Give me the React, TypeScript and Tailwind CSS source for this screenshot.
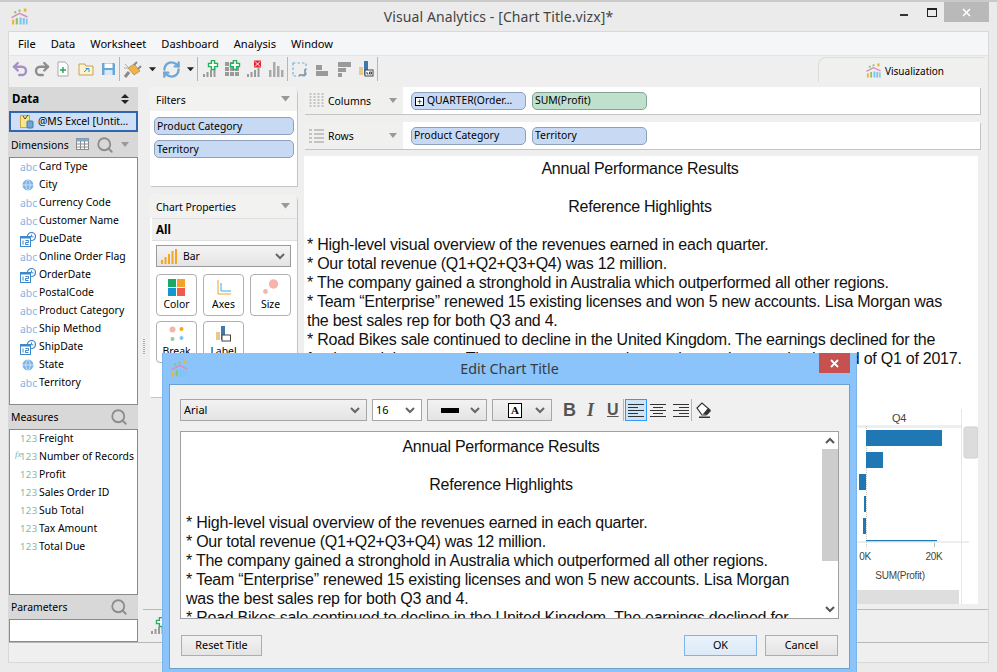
import React from "react";
import { Undo2, Redo2, RefreshCw, Search, Globe } from "lucide-react";

const Logo = ({ s = 16 }: { s?: number }) => (
  <svg width={s} height={s} viewBox="0 0 16 16">
    <rect x="12" y="0.5" width="2.5" height="3" fill="#f5b335" />
    <rect x="7" y="1.5" width="2" height="2" fill="#8cc46c" />
    <rect x="3" y="3" width="2" height="2" fill="#8cc46c" />
    <polyline points="0.5,9 8,5 15.5,8.5" fill="none" stroke="#d68fb8" strokeWidth="1.4" />
    <rect x="1" y="11" width="2" height="4.5" fill="#f5b335" />
    <rect x="4.5" y="9.5" width="2" height="6" fill="#8cc46c" />
    <rect x="8" y="9" width="2" height="6.5" fill="#7ec4ee" />
    <rect x="11" y="9.5" width="2" height="6" fill="#7ec4ee" />
    <rect x="14" y="10" width="1.6" height="5.5" fill="#7ec4ee" />
  </svg>
);

const Chev = ({ c = "#666" }: { c?: string }) => (
  <svg width="10" height="7" viewBox="0 0 10 7" className="shrink-0">
    <polyline points="1,1 5,5 9,1" fill="none" stroke={c} strokeWidth="2" />
  </svg>
);

const Caret = ({ c = "#9a9a9a", w = 10 }: { c?: string; w?: number }) => (
  <svg width={w} height={w / 2 + 1} viewBox="0 0 10 6" className="shrink-0">
    <polygon points="0,0 10,0 5,6" fill={c} />
  </svg>
);

const Sep = () => <div className="w-px h-[24px] bg-[#b5b5b5] shrink-0" />;

const Bars = ({ c = "#9a9a9a" }: { c?: string }) => (
  <g fill={c}>
    <rect x="1" y="14" width="2" height="3" />
    <rect x="4.5" y="12" width="2" height="5" />
    <rect x="8" y="10" width="2" height="7" />
    <rect x="11.5" y="8" width="2" height="9" />
  </g>
);
const Plus = ({ x, y }: { x: number; y: number }) => (
  <path
    d={`M${x - 1.6} ${y - 4.5}h3.2v2.9h2.9v3.2h-2.9v2.9h-3.2v-2.9h-2.9v-3.2h2.9z`}
    fill="#fff"
    stroke="#1fb45a"
    strokeWidth="1.4"
  />
);

const I = ({ w = 18, children }: { w?: number; children: React.ReactNode }) => (
  <svg width={w} height="18" viewBox={`0 0 ${w} 18`} className="shrink-0">
    {children}
  </svg>
);

function Toolbar() {
  return (
    <div className="h-[26px] flex items-center relative">
      <div className="flex items-center w-[809px] h-full">
        <div className="w-[2px]" />
        <Undo2 size={18} color="#a88fc8" strokeWidth={3.2} />
        <Redo2 size={18} color="#8c8c8c" strokeWidth={3.2} className="ml-[4px]" />
        <div className="ml-[3px]">
          <I>
            <path d="M4 2h7l3 3v11H4z" fill="#fff" stroke="#a8a8a8" />
            <path d="M9 7v6M6 10h6" stroke="#23a455" strokeWidth="1.4" />
          </I>
        </div>
        <div className="ml-[6px]">
          <I>
            <path d="M1 4h6l1 2h7v9H1z" fill="#fdf3d2" stroke="#c7a24f" />
            <path d="M6 12l4-3.5M7.5 8.5H11V12" stroke="#3e8ccb" fill="none" />
          </I>
        </div>
        <div className="ml-[4px]">
          <I>
            <path d="M2 3h12l1 1v11H2z" fill="#6aa6d6" />
            <rect x="4.5" y="3.5" width="8" height="4.5" fill="#fff" />
            <rect x="4.5" y="10" width="8" height="5" fill="#dce9f4" />
          </I>
        </div>
        <div className="ml-[1px]"><Sep /></div>
        <div className="ml-[3px]">
          <I w={20}>
            <path d="M2 17l4-5" stroke="#8a8a8a" strokeWidth="3" />
            <path d="M5 8l6-4 6 7-6 4z" fill="#f2b24a" stroke="#8f7c50" strokeWidth=".6" />
            <path d="M11 5l3-3M15 9l3-3" stroke="#8a8a8a" strokeWidth="2" />
            <path d="M2 4l3 3M1 8h4" stroke="#a9a9a9" />
          </I>
        </div>
        <div className="ml-[6px]"><Caret c="#222" w={7} /></div>
        <RefreshCw size={19} color="#6fa8d6" strokeWidth={3} className="ml-[6px]" />
        <div className="ml-[6px]"><Caret c="#222" w={7} /></div>
        <div className="ml-[3px]"><Sep /></div>
        <div className="ml-[4px]">
          <I><Bars /><Plus x={11} y={5} /></I>
        </div>
        <div className="ml-[4px]">
          <I>
            <g fill="#9a9a9a">
              <rect x="1" y="2" width="4" height="4" /><rect x="1" y="7" width="4" height="4" /><rect x="1" y="12" width="4" height="4" />
              <rect x="6" y="7" width="4" height="4" /><rect x="6" y="12" width="4" height="4" />
              <rect x="11" y="12" width="4" height="4" /><rect x="11" y="7" width="4" height="4" /><rect x="6" y="2" width="4" height="4" />
            </g>
            <Plus x={11} y={5} />
          </I>
        </div>
        <div className="ml-[4px]">
          <I>
            <Bars />
            <rect x="8" y="0.5" width="7" height="7" fill="#e8202a" />
            <path d="M9 1.5l5 5M14 1.5l-5 5" stroke="#fff" />
          </I>
        </div>
        <div className="ml-[4px]">
          <I>
            <g fill="#ababab">
              <rect x="1" y="10" width="2.5" height="7" />
              <rect x="5" y="2" width="2.5" height="15" />
              <rect x="9" y="6" width="2.5" height="11" />
              <rect x="13" y="10" width="2.5" height="7" />
            </g>
          </I>
        </div>
        <div className="ml-[1px]"><Sep /></div>
        <div className="ml-[3px]">
          <I>
            <path d="M2 3h13v13H2z" fill="none" stroke="#6fb0de" strokeDasharray="2.5 2" strokeWidth="1.2" />
            <path d="M14 9v6h-6" fill="none" stroke="#8a8a8a" strokeWidth="1.5" />
          </I>
        </div>
        <div className="ml-[4px]">
          <I>
            <rect x="3" y="5" width="6" height="5" fill="#9a9a9a" />
            <rect x="3" y="11" width="12" height="5" fill="#9a9a9a" />
          </I>
        </div>
        <div className="ml-[6px]">
          <I>
            <rect x="1" y="2" width="13" height="5" fill="#9a9a9a" />
            <rect x="1" y="8" width="8" height="4" fill="#9a9a9a" />
            <rect x="1" y="13" width="4" height="4" fill="#9a9a9a" />
          </I>
        </div>
        <div className="ml-[3px]">
          <I>
            <rect x="1" y="7" width="4" height="8" fill="#e8c88e" />
            <rect x="6" y="1" width="4" height="14" fill="#3f78ae" />
            <rect x="7" y="10" width="8" height="6" fill="#fff" stroke="#444" />
            <path d="M9 12v2h1.5M11.5 12h2v2h-2z" stroke="#444" fill="none" />
          </I>
        </div>
        <div className="ml-[1px]"><Sep /></div>
      </div>
      <div className="h-[25px] self-end w-[167px] bg-[#f0f0ee] border-t border-l border-[#dcdcdc] rounded-tl-lg flex items-center pl-[47px] gap-[4px] text-[10px] text-black">
        <Logo s={15} />
        <span className="pt-[2px]">Visualization</span>
      </div>
    </div>
  );
}

const AbcI = () => <span className="text-[#86b3e6] text-[10.4px] leading-none w-[16px] text-center">abc</span>;
const GlobeI = () => (
  <span className="w-[16px] flex justify-center">
    <Globe size={14} color="#fff" fill="#7fb3e6" strokeWidth={1} />
  </span>
);
const DateI = () => (
  <svg width="16" height="15" viewBox="0 0 16 15" className="shrink-0">
    <circle cx="11.5" cy="4.5" r="4" fill="#fff" stroke="#3f87c9" strokeWidth="1.2" />
    <path d="M11.5 2.5v2.3h2" stroke="#3f87c9" fill="none" />
    <rect x="0.5" y="4.5" width="10" height="10" fill="#fff" stroke="#3f87c9" />
    <rect x="0.5" y="4.5" width="10" height="2" fill="#3f87c9" />
    <path d="M3 8.5v4M5.5 8.5h3v2h-3v2h3" stroke="#3f87c9" fill="none" />
  </svg>
);

const dims: [string, React.ReactNode][] = [
  ["Card Type", <AbcI />],
  ["City", <GlobeI />],
  ["Currency Code", <AbcI />],
  ["Customer Name", <AbcI />],
  ["DueDate", <DateI />],
  ["Online Order Flag", <AbcI />],
  ["OrderDate", <DateI />],
  ["PostalCode", <AbcI />],
  ["Product Category", <AbcI />],
  ["Ship Method", <AbcI />],
  ["ShipDate", <DateI />],
  ["State", <GlobeI />],
  ["Territory", <AbcI />],
];
const meas = ["Freight", "Number of Records", "Profit", "Sales Order ID", "Sub Total", "Tax Amount", "Total Due"];

const Mag = () => <Search size={18} color="#8c8c8c" strokeWidth={2.4} className="shrink-0" />;

function LeftCol() {
  return (
    <div className="w-[129px] shrink-0 pt-[5px] flex flex-col text-[10.4px] text-black">
      <div className="h-[23px] bg-[#d8d8d8] flex items-center justify-between pl-[3px] pr-[9px] font-bold text-[11.5px]">
        <span>Data</span>
        <svg width="8" height="10" viewBox="0 0 8 10"><path d="M0 4l4-4 4 4zM0 6l4 4 4-4z" fill="#222" /></svg>
      </div>
      <div className="h-[22px] bg-[#d8d8d8] flex items-center">
        <div className="w-full h-[21px] bg-[#cfe0f6] border-2 border-[#2f66ad] flex items-center pl-[9px] gap-[4px]">
          <svg width="14" height="15" viewBox="0 0 14 15" className="shrink-0">
            <rect x="0.5" y="1.5" width="9" height="12" fill="#f8e58c" stroke="#c8a84a" />
            <path d="M3 2l2 3 3-4" stroke="#444" fill="none" />
            <rect x="7" y="7" width="6" height="7" rx="1" fill="#6ea6d8" stroke="#3f78ae" />
          </svg>
          <span className="whitespace-nowrap pt-[2px]">@MS Excel [Untit…</span>
        </div>
      </div>
      <div className="h-[25px] bg-[#d8d8d8] flex items-center pl-[2px] pr-[9px]">
        <span className="pt-[2px] w-[53px]">Dimensions</span>
        <svg width="14" height="13" viewBox="0 0 14 13" className="ml-[12px] shrink-0">
          <rect x="0.5" y="0.5" width="12" height="11" fill="#fff" stroke="#8a8a8a" />
          <rect x="0.5" y="0.5" width="12" height="3" fill="#7fa8d0" />
          <path d="M4.5 3v8M8.5 3v8M1 6h11M1 9h11" stroke="#8a8a8a" />
        </svg>
        <div className="ml-[6px]"><Mag /></div>
        <div className="ml-[7px]"><Caret w={8} /></div>
      </div>
      <div className="h-[248px] bg-white border border-[#8a8a8a]">
        {dims.map(([n, ic]) => (
          <div key={n} className="h-[18px] flex items-center pl-[10px] gap-[3px] whitespace-nowrap">
            {ic}
            <span>{n}</span>
          </div>
        ))}
      </div>
      <div className="h-[24px] bg-[#d8d8d8] flex items-center justify-between pl-[2px] pr-[10px]">
        <span className="pt-[2px]">Measures</span>
        <Mag />
      </div>
      <div className="h-[166px] bg-white border border-[#8a8a8a]">
        {meas.map((n) => (
          <div key={n} className="h-[18px] flex items-center pl-[10px] gap-[3px] whitespace-nowrap relative">
            {n === "Number of Records" && (
              <span className="absolute left-[5px] top-0 text-[9px] italic text-[#7fb5a5] font-['Liberation_Serif',serif]">fx</span>
            )}
            <span className="text-[#83b8a8] text-[9.5px] tracking-[0.4px] leading-none w-[16px] text-right">123</span>
            <span>{n}</span>
          </div>
        ))}
      </div>
      <div className="h-[24px] bg-[#d8d8d8] flex items-center justify-between pl-[2px] pr-[10px]">
        <span className="pt-[2px]">Parameters</span>
        <Mag />
      </div>
      <div className="h-[23px] bg-white border border-[#8a8a8a]" />
    </div>
  );
}

const Pill = ({ t, w = "w-[115px]", green }: { t: React.ReactNode; w?: string; green?: boolean }) => (
  <div
    className={`${w} h-[18px] shrink-0 rounded-[5px] border flex items-center pl-[2px] pt-[1px] whitespace-nowrap text-[10.4px] text-black ${
      green ? "bg-[#bfe0cc] border-[#86a392]" : "bg-[#c8daf3] border-[#8fa0bb]"
    }`}
  >
    {t}
  </div>
);

const PanelHead = ({ t }: { t: string }) => (
  <div className="h-[24px] bg-[#f2f2f0] rounded-t-md flex items-center justify-between pl-[6px] pr-[7px]">
    <span className="pt-[3px]">{t}</span>
    <Caret c="#999" w={9} />
  </div>
);

const PropBtn = ({ t, children }: { t: string; children: React.ReactNode }) => (
  <div className="h-[42px] border border-[#b0b0b0] rounded-[4px] bg-white flex flex-col items-center pt-[2px]">
    <div className="h-[20px] flex items-center">{children}</div>
    <span>{t}</span>
  </div>
);

function FilterCol() {
  return (
    <div className="w-[147px] shrink-0 flex flex-col gap-[8px] text-[10.4px] text-black">
      <div className="h-[99px] bg-white shadow-[1px_1px_0_#c4c4c4] rounded-t-md">
        <PanelHead t="Filters" />
        <div className="pt-[6px] pl-[4px] pr-[3px] flex flex-col gap-[5px]">
          <Pill t="Product Category" w="w-full" />
          <Pill t="Territory" w="w-full" />
        </div>
      </div>
      <div className="h-[203px] bg-white shadow-[1px_1px_0_#c4c4c4] rounded-t-md">
        <PanelHead t="Chart Properties" />
        <div className="h-[23px] ml-[2px] bg-[#f0f0f0] border-y border-[#dedede] flex items-center pl-[4px] font-bold text-[11.5px]">All</div>
        <div className="mx-[6px] mt-[4px] h-[22px] border border-[#9a9a9a] bg-gradient-to-b from-[#f4f4f4] to-[#e4e4e4] flex items-center pl-[4px] pr-[5px]">
          <svg width="16" height="15" viewBox="0 0 16 15">
            <g fill="#f5a623">
              <rect x="0" y="11" width="2" height="4" /><rect x="3.5" y="8" width="2" height="7" />
              <rect x="7" y="5" width="2" height="10" /><rect x="10.5" y="2" width="2" height="13" />
              <rect x="14" y="0" width="2" height="15" />
            </g>
          </svg>
          <span className="ml-[6px] flex-1 pt-[2px]">Bar</span>
          <Chev />
        </div>
        <div className="grid grid-cols-3 gap-x-[6px] gap-y-[5px] mx-[6px] mt-[7px]">
          <PropBtn t="Color">
            <svg width="17" height="17" viewBox="0 0 17 17">
              <rect width="8" height="8" fill="#1aab62" />
              <rect x="9" width="8" height="8" fill="#f5a02a" />
              <rect y="9" width="8" height="8" fill="#1396cf" />
              <rect x="9" y="9" width="8" height="8" fill="#ef5b4c" />
            </svg>
          </PropBtn>
          <PropBtn t="Axes">
            <svg width="14" height="15" viewBox="0 0 14 15">
              <path d="M1 0v14h13" fill="none" stroke="#f5a02a" />
              <path d="M4 3v8h10" fill="none" stroke="#37aee0" />
            </svg>
          </PropBtn>
          <PropBtn t="Size">
            <svg width="16" height="16" viewBox="0 0 16 16">
              <circle cx="10.5" cy="5" r="4.7" fill="#f6b5ab" />
              <circle cx="2.5" cy="12.5" r="2.4" fill="#f6b5ab" />
            </svg>
          </PropBtn>
          <PropBtn t="Break">
            <svg width="16" height="16" viewBox="0 0 16 16">
              <circle cx="3.5" cy="3.5" r="3" fill="#f6b5ab" />
              <circle cx="12.5" cy="3" r="2" fill="#f5a623" />
              <circle cx="3.5" cy="13" r="2" fill="#8fcb9b" />
              <circle cx="12.5" cy="12" r="2" fill="#7ec4ee" />
            </svg>
          </PropBtn>
          <PropBtn t="Label">
            <svg width="15" height="17" viewBox="0 0 15 17">
              <rect x="0" y="6" width="4" height="8" fill="#e8c88e" />
              <rect x="5" y="0" width="4" height="14" fill="#3f78ae" />
              <rect x="6" y="9" width="8.5" height="6" fill="#fff" stroke="#444" />
            </svg>
          </PropBtn>
        </div>
      </div>
    </div>
  );
}

const Shelf = ({ t, icon, children }: { t: string; icon: React.ReactNode; children: React.ReactNode }) => (
  <div className="h-[27px] flex shadow-[1px_1px_0_#c4c4c4] bg-white text-[10.4px] text-black">
    <div className="w-[99px] bg-[#f0f0ee] flex items-center pl-[5px] shrink-0">
      {icon}
      <span className="ml-[4px] flex-1 pt-[2px]">{t}</span>
      <span className="mr-[6px]"><Caret c="#999" w={8} /></span>
    </div>
    <div className="flex items-center gap-[6px] pl-[8px]">{children}</div>
  </div>
);

const L = ({ c }: { c: string }) => <div className="whitespace-nowrap">{c || "\u00a0"}</div>;

const rearLines = [
  "* High-level visual overview of the revenues earned in each quarter.",
  "* Our total revenue (Q1+Q2+Q3+Q4) was 12 million.",
  "* The company gained a stronghold in Australia which outperformed all other regions.",
  "* Team “Enterprise” renewed 15 existing licenses and won 5 new accounts. Lisa Morgan was",
  "the best sales rep for both Q3 and 4.",
  "* Road Bikes sale continued to decline in the United Kingdom. The earnings declined for the",
  "for the straight quarter. The company expects the earnings to improve by the end of Q1 of 2017.",
];

function Chart() {
  return (
    <div className="mt-auto self-end h-[196px] w-[121px] shrink-0">
      <svg width="121" height="196" viewBox="0 0 121 196">
        <rect x="0" y="17" width="104" height="3" fill="#eeeeee" />
        <rect x="0" y="133" width="112" height="2" fill="#eeeeee" />
        <rect x="104" y="1" width="1" height="195" fill="#e6e6e6" />
        <text x="42" y="14" fontSize="11" textAnchor="middle" fill="#444" fontFamily="Liberation Sans, sans-serif">Q4</text>
        <line x1="9.5" y1="18" x2="9.5" y2="139" stroke="#c8c8c8" strokeDasharray="1 1" />
        <g fill="#1f77b4">
          <rect x="9" y="22" width="76" height="16" />
          <rect x="9" y="44" width="17" height="16" />
          <rect x="2" y="66" width="7" height="16" />
          <rect x="7" y="88" width="2" height="16" />
          <rect x="6" y="110" width="3" height="16" />
          <rect x="9" y="132" width="71" height="1.2" />
        </g>
        <line x1="77.5" y1="135" x2="77.5" y2="139" stroke="#bbb" />
        <text x="8" y="152" fontSize="10" textAnchor="middle" fill="#444" fontFamily="Liberation Sans, sans-serif">0K</text>
        <text x="77" y="152" fontSize="10" textAnchor="middle" fill="#444" fontFamily="Liberation Sans, sans-serif">20K</text>
        <text x="43" y="171" fontSize="10" textAnchor="middle" fill="#444" fontFamily="Liberation Sans, sans-serif">SUM(Profit)</text>
        <rect x="0" y="182" width="102" height="14" fill="#dedede" />
        <rect x="107" y="19" width="14" height="31" rx="2" fill="#dcdcdc" stroke="#cfcfcf" />
      </svg>
    </div>
  );
}

function Main() {
  return (
    <div className="flex-1 flex flex-col min-w-0">
      <div className="h-[527px] flex">
        <div className="w-[12px] shrink-0 flex items-center justify-center">
          <div className="w-[2px] h-[16px] mt-[2px] bg-[repeating-linear-gradient(#aaa_0,#aaa_1px,transparent_1px,transparent_2px)]" />
        </div>
        <div className="pt-[5px]"><FilterCol /></div>
        <div className="w-[676px] ml-[7px] pt-[5px] flex flex-col">
          <Shelf
            t="Columns"
            icon={
              <svg width="15" height="15" viewBox="0 0 15 15">
                <path d="M1.5 0v15M5.5 0v15M9.5 0v15M13.5 0v15" stroke="#c4c4c4" strokeWidth="2" strokeDasharray="2 1" />
              </svg>
            }
          >
            <Pill
              t={
                <span className="flex items-center gap-[3px]">
                  <span className="w-[9px] h-[9px] border border-black bg-white flex items-center justify-center text-[9px] leading-none ml-px">+</span>
                  QUARTER(Order…
                </span>
              }
            />
            <Pill t="SUM(Profit)" w="w-[115px]" green />
          </Shelf>
          <div className="h-[8px]" />
          <Shelf
            t="Rows"
            icon={
              <svg width="15" height="15" viewBox="0 0 15 15">
                <path d="M0 2h3M5 2h10M0 6h3M5 6h10M0 10h3M5 10h10M0 14h3M5 14h10" stroke="#b4b4b4" strokeWidth="1.4" />
              </svg>
            }
          >
            <Pill t="Product Category" />
            <Pill t="Territory" />
          </Shelf>
          <div className="mt-[7px] h-[448px] w-[674px] bg-white flex flex-col overflow-hidden font-['Liberation_Sans',sans-serif] text-[16px] tracking-[-0.25px] leading-[19px] text-[#111]">
            <div className="pt-[3px] pl-[3px] pr-[5px]">
              <div className="text-center">Annual Performance Results</div>
              <L c="" />
              <div className="text-center">Reference Highlights</div>
              <L c="" />
              {rearLines.map((l) => <L key={l} c={l} />)}
            </div>
            <Chart />
          </div>
        </div>
      </div>
      <div className="h-[33px] ml-[5px] border-t border-[#b8b8b8] flex items-center pl-[7px]">
        <I><Bars /><Plus x={11} y={5} /></I>
      </div>
    </div>
  );
}

const Sel = ({ w, white, children }: { w: string; white?: boolean; children: React.ReactNode }) => (
  <div
    className={`${w} h-[22px] shrink-0 border border-[#a6a6a6] flex items-center pr-[6px] ${
      white ? "bg-white" : "bg-gradient-to-b from-[#f2f2f2] to-[#e4e4e4]"
    }`}
  >
    <div className="flex-1 min-w-0">{children}</div>
    <Chev />
  </div>
);

const AlignI = ({ m }: { m: "l" | "c" | "r" }) => {
  const rows: [number, number][] = [[3, 16], [6, 10], [9, 16], [12, 10], [15, 16]];
  return (
    <svg width="16" height="18" viewBox="0 0 16 18">
      {rows.map(([y, w]) => {
        const x = m === "l" ? 0 : m === "c" ? (16 - w) / 2 : 16 - w;
        return <rect key={y} x={x} y={y} width={w} height="1" fill="#333" />;
      })}
    </svg>
  );
};

const DBtn = ({ t, w, on }: { t: string; w: string; on?: boolean }) => (
  <div
    className={`${w} h-[21px] border flex items-center justify-center text-[10.8px] text-black ${
      on ? "bg-gradient-to-b from-[#eaf3fc] to-[#dce9f7] border-[#7eb4ea]" : "bg-gradient-to-b from-[#f2f2f2] to-[#e4e4e4] border-[#adadad]"
    }`}
  >
    {t}
  </div>
);

const dialogLines = [
  "* High-level visual overview of the revenues earned in each quarter.",
  "* Our total revenue (Q1+Q2+Q3+Q4) was 12 million.",
  "* The company gained a stronghold in Australia which outperformed all other regions.",
  "* Team “Enterprise” renewed 15 existing licenses and won 5 new accounts. Lisa Morgan",
  "was the best sales rep for both Q3 and 4.",
  "* Road Bikes sale continued to decline in the United Kingdom. The earnings declined for",
];

function Dialog() {
  return (
    <div className="absolute left-[162px] top-[351px] w-[695px] h-[321px] bg-[#8ac4fa] border-l border-r border-[#7db5ea] flex flex-col text-[11px] text-black">
      <div className="h-[31px] shrink-0 flex items-center relative pl-[8px]">
        <Logo s={17} />
        <span className="absolute left-0 right-0 text-center text-[14.3px] text-[#3a3a3a]">Edit Chart Title</span>
        <div className="absolute right-[6px] top-0 w-[31px] h-[20px] bg-[#c75050] flex items-center justify-center">
          <svg width="9" height="9" viewBox="0 0 9 9"><path d="M1 1l7 7M8 1l-7 7" stroke="#fff" strokeWidth="1.8" /></svg>
        </div>
      </div>
      <div className="mx-[6px] h-[285px] shrink-0 bg-[#f0f0f0] border border-[#6fa0cc] pl-[10px] pr-[10px] pt-[14px]">
        <div className="flex items-center h-[22px]">
          <Sel w="w-[187px]"><span className="pl-[3px]">Arial</span></Sel>
          <div className="ml-[5px]"><Sel w="w-[50px]" white><span className="pl-[3px]">16</span></Sel></div>
          <div className="ml-[5px]">
            <Sel w="w-[60px]"><div className="ml-[13px] w-[18px] h-[5px] bg-black" /></Sel>
          </div>
          <div className="ml-[5px]">
            <Sel w="w-[60px]">
              <div className="ml-[15px] w-[14px] h-[15px] border border-black bg-white flex items-center justify-center font-['Liberation_Serif',serif] font-bold text-[11px] leading-none">A</div>
            </Sel>
          </div>
          <span className="ml-[11px] w-[11px] text-center font-['Liberation_Sans',sans-serif] font-bold text-[18px] text-[#555]">B</span>
          <span className="ml-[11px] w-[11px] text-center font-['Liberation_Serif',serif] italic font-bold text-[18px] text-[#555]">I</span>
          <span className="ml-[11px] w-[11px] text-center font-['Liberation_Sans',sans-serif] font-bold text-[16px] text-[#555] underline">U</span>
          <div className="ml-[5px] w-px h-[22px] bg-[#b5b5b5]" />
          <div className="ml-px w-[22px] h-[22px] bg-[#cce4f7] border border-[#3399ff] flex items-center justify-center"><AlignI m="l" /></div>
          <div className="w-[22px] flex justify-center"><AlignI m="c" /></div>
          <div className="ml-px w-[21px] flex justify-center"><AlignI m="r" /></div>
          <div className="w-px h-[22px] bg-[#b5b5b5]" />
          <div className="ml-[4px]">
            <svg width="16" height="16" viewBox="0 0 16 16">
              <path d="M1 6l5-5 8 7-4 5H6z" fill="#fff" stroke="#333" strokeWidth="1.2" />
              <path d="M7 12l5-6 3 3-4 4z" fill="#333" />
              <rect x="3" y="14.5" width="11" height="1.5" fill="#333" />
            </svg>
          </div>
        </div>
        <div className="mt-[10px] h-[188px] bg-white border border-[#a0a0a0] flex overflow-hidden">
          <div className="flex-1 min-w-0 pt-[5px] pl-[5px] pr-[6px] font-['Liberation_Sans',sans-serif] text-[16px] tracking-[-0.25px] leading-[19px] text-[#111] overflow-hidden">
            <div className="text-center">Annual Performance Results</div>
            <L c="" />
            <div className="text-center">Reference Highlights</div>
            <L c="" />
            {dialogLines.map((l) => <L key={l} c={l} />)}
          </div>
          <div className="w-[16px] shrink-0 flex flex-col items-center">
            <div className="h-[17px] flex items-center justify-center rotate-180"><Chev c="#555" /></div>
            <div className="w-full h-[112px] bg-[#cdcdcd]" />
            <div className="flex-1" />
            <div className="h-[17px] flex items-center justify-center"><Chev c="#555" /></div>
          </div>
        </div>
        <div className="mt-[16px] flex items-center pl-px pr-px">
          <DBtn t="Reset Title" w="w-[81px]" />
          <div className="flex-1" />
          <DBtn t="OK" w="w-[73px]" on />
          <div className="w-[8px]" />
          <DBtn t="Cancel" w="w-[73px]" />
        </div>
      </div>
    </div>
  );
}

export default function App() {
  return (
    <div className="relative w-[997px] h-[672px] overflow-hidden bg-[#ebebeb] border-t-2 border-[#c9c9c9] font-['Noto_Sans',sans-serif]">
      <div className="h-[29px] flex items-center relative pl-[11px]">
        <Logo s={17} />
        <span className="absolute left-0 right-0 text-center text-[14px] text-[#444] tracking-[0.1px]">
          Visual Analytics - [Chart Title.vizx]*
        </span>
        <div className="absolute top-0 right-[8px] flex items-start">
          <div className="w-[8px] h-[2px] mt-[12px] bg-[#333] mr-[19px]" />
          <div className="w-[10px] h-[9px] mt-[6px] border border-[#222] border-t-2 mr-[7px]" />
          <div className="w-[45px] h-[20px] bg-[#b9b9b9] flex items-center justify-center">
            <svg width="9" height="9" viewBox="0 0 9 9"><path d="M1 1l7 7M8 1l-7 7" stroke="#fff" strokeWidth="1.6" /></svg>
          </div>
        </div>
      </div>
      <div className="ml-[8px] w-[981px] h-[632px] border border-[#d8d8d8] bg-[#efefef] flex flex-col">
        <div className="h-[24px] shrink-0 bg-[#f5f6f8] border-b border-[#e4e4e4] flex items-center pl-[9px] pt-[2px] gap-[15px] text-[11.1px] text-black">
          <span>File</span>
          <span>Data</span>
          <span>Worksheet</span>
          <span>Dashboard</span>
          <span>Analysis</span>
          <span>Window</span>
        </div>
        <Toolbar />
        <div className="h-[560px] shrink-0 flex">
          <LeftCol />
          <Main />
        </div>
        <div className="flex-1 border-t border-[#b8b8b8]" />
      </div>
      <Dialog />
    </div>
  );
}
